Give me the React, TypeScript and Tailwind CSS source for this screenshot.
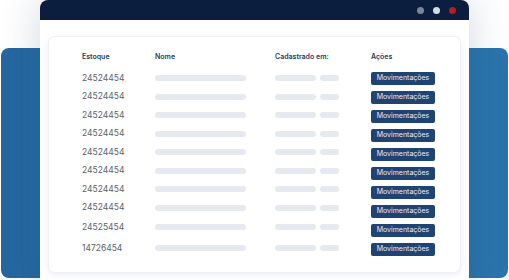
import React from "react";

const rows = [
  { code: "24524454", h: "h-[18.5px]" },
  { code: "24524454", h: "h-[18.5px]" },
  { code: "24524454", h: "h-[18.5px]" },
  { code: "24524454", h: "h-[18.5px]" },
  { code: "24524454", h: "h-[18.5px]" },
  { code: "24524454", h: "h-[18.5px]" },
  { code: "24524454", h: "h-[18.5px]" },
  { code: "24524454", h: "h-[18.5px]" },
  { code: "24525454", h: "h-[20.5px]" },
  { code: "14726454", h: "h-[21.5px]" },
];

function Bar({ className }: { className: string }) {
  return <div className={`h-[6px] rounded-full bg-[#e6eaf0] ${className}`} />;
}

export default function App() {
  return (
    <div className="relative h-[280px] w-[509px] overflow-hidden bg-white font-['Inter',sans-serif]">
      {/* blue backdrop behind the window */}
      <div className="absolute left-[1px] right-[1px] top-[48px] h-[230px] rounded-[8px] bg-gradient-to-r from-[#2567a0] to-[#2a75ad]" />

      <div className="relative ml-[40px] w-[429px] h-[300px] rounded-t-[8px] bg-white shadow-[0_0_40px_rgba(40,70,110,0.22)] overflow-hidden">
        <div className="flex h-[20px] items-center justify-end gap-[9px] bg-[#0b1e3d] pr-[13px]">
          <span className="h-[7px] w-[7px] rounded-full bg-[#7b8596]" />
          <span className="h-[7px] w-[7px] rounded-full bg-[#d6dae1]" />
          <span className="h-[7px] w-[7px] rounded-full bg-[#b81c1c]" />
        </div>

        <div className="px-[8px] pt-[16px]">
          <div className="flex h-[237px] rounded-[7px] border border-[#eef0f6] bg-white pl-[33px] pt-[13px] shadow-[0_2px_6px_rgba(30,50,90,0.08)]">
            <div className="w-[289px]">
              <div className="grid h-[14px] grid-cols-[73px_120px_96px] items-center text-[7px] font-semibold text-[#1f3a5c]">
                <span>Estoque</span>
                <span>Nome</span>
                <span>Cadastrado em:</span>
              </div>
              <div className="mt-[5px]">
                {rows.map((r, i) => (
                  <div key={i} className={`grid grid-cols-[73px_120px_96px] items-center ${r.h}`}>
                    <span className="text-[8.5px] font-normal text-[#5a606b]">{r.code}</span>
                    <Bar className="w-[91px]" />
                    <div className="flex gap-[4px]">
                      <Bar className="w-[41px]" />
                      <Bar className="w-[19px]" />
                    </div>
                  </div>
                ))}
              </div>
            </div>

            <div>
              <div className="flex h-[14px] items-center text-[7px] font-semibold text-[#1f3a5c]">Ações</div>
              <div className="mt-[8px] flex flex-col gap-[6px]">
                {rows.map((_, i) => (
                  <button
                    key={i}
                    className="flex h-[13px] w-[64px] items-center justify-center rounded-[2px] bg-[#1f4474] text-[7px] text-[#e6ecf4]"
                  >
                    Movimentações
                  </button>
                ))}
              </div>
            </div>
          </div>
        </div>
      </div>
    </div>
  );
}
